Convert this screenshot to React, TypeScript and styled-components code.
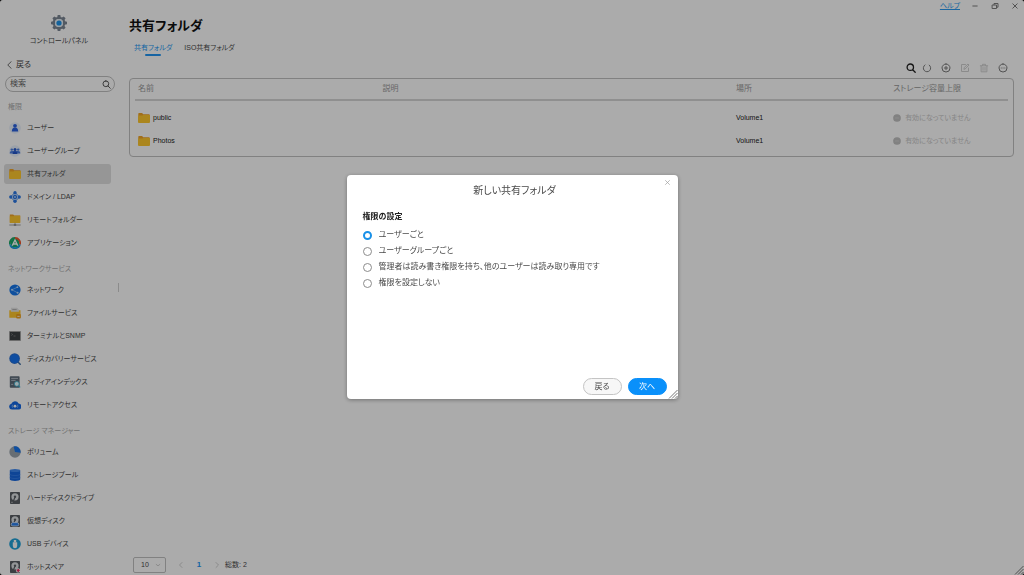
import React, { useState } from "react";
import styled, { createGlobalStyle, css } from "styled-components";

const GlobalStyle = createGlobalStyle`
  *, *::before, *::after { box-sizing: border-box; }
  html, body { margin: 0; background: #000; }
  body, button, input, select {
    font-family: "Liberation Sans", "Noto Sans CJK JP", sans-serif;
    font-size: 8px;
    line-height: 12px;
    font-feature-settings: "palt";
    color: #4a4a4a;
  }
  button, input, select { margin: 0; padding: 0; border: 0; background: none; }
  h1, h2, ul { margin: 0; padding: 0; }
  ul { list-style: none; }
  svg { display: block; flex: none; }
`;

const Window = styled.div`
  position: relative;
  display: flex;
  height: 100vh;
  overflow: hidden;
  background: #fff;
  border-radius: 3px;
`;

/* ---------- sidebar ---------- */

const Sidebar = styled.aside`
  display: flex;
  flex-direction: column;
  flex: none;
  width: 116px;
  padding: 14px 0 0 4px;
`;

const PanelHeader = styled.div`
  display: flex;
  flex-direction: column;
  align-items: center;
  gap: 3px;
  padding-right: 2px;
  font-size: 7px;
  line-height: 12px;
`;

const BackButton = styled.button`
  display: flex;
  align-items: center;
  align-self: flex-start;
  gap: 2px;
  margin: 12px 0 5px 2px;
`;

const SearchBox = styled.label`
  display: flex;
  align-items: center;
  flex: none;
  height: 16px;
  margin: 0 1px 9px 1px;
  padding: 0 3px 0 4px;
  border: 1px solid #c0c0c0;
  border-radius: 8px;
`;

const SearchInput = styled.input`
  flex: 1;
  min-width: 0;
  outline: none;
  &::placeholder { color: #666; opacity: 1; }
`;

const Nav = styled.nav`
  display: flex;
  flex-direction: column;
  gap: 10px;
  padding-right: 5px;
`;

const NavHeading = styled.h2`
  height: 17px;
  padding-left: 4px;
  font-size: 7px;
  font-weight: 400;
  line-height: 12px;
  color: #aaa;
`;

const NavList = styled.ul`
  display: flex;
  flex-direction: column;
  gap: 3px;
`;

const NavItem = styled.button<{ $active?: boolean }>`
  display: flex;
  align-items: center;
  gap: 6px;
  width: 100%;
  height: 20px;
  padding: 0 5px;
  border-radius: 3px;
  font-size: 7px;
  white-space: nowrap;
  background: ${(p) => (p.$active ? "#e0e0e0" : "transparent")};
`;

const Splitter = styled.div`
  display: flex;
  align-items: center;
  flex: none;
  width: 5px;
  padding-left: 2px;
  &::before {
    content: "";
    width: 1px;
    height: 9px;
    background: #d0d0d0;
  }
`;

/* ---------- main ---------- */

const Main = styled.main`
  display: flex;
  flex-direction: column;
  flex: 1;
  min-width: 0;
  padding: 0 10px 2px 8px;
`;

const TitleBar = styled.div`
  display: flex;
  justify-content: flex-end;
  align-items: center;
  gap: 10px;
  height: 12px;
  margin-right: -6px;
`;

const HelpLink = styled.a`
  font-size: 7px;
  color: #2a9af0;
  text-decoration: underline;
`;

const IconButton = styled.button<{ $faded?: boolean }>`
  display: flex;
  align-items: center;
  justify-content: center;
  width: 10px;
  height: 10px;
  color: ${(p) => (p.$faded ? "#cfcfcf" : "#7c7c7c")};
`;

const PageTitle = styled.h1`
  margin-top: 5px;
  font-size: 13px;
  line-height: 18px;
  color: #111;
`;

const Tabs = styled.div`
  display: flex;
  gap: 12px;
  margin: 7px 0 0 5px;
`;

const Tab = styled.button<{ $active?: boolean }>`
  display: flex;
  flex-direction: column;
  align-items: center;
  height: 14px;
  font-size: 7px;
  ${(p) =>
    p.$active &&
    css`
      color: #2196f3;
      &::after {
        content: "";
        width: 16px;
        height: 2px;
        border-radius: 1px;
        background: #2196f3;
      }
    `}
`;

const Toolbar = styled.div`
  display: flex;
  justify-content: flex-end;
  gap: 9px;
  margin: 7px 6px 5px 0;
`;

const SearchTool = styled(IconButton)`
  margin-right: -3px;
  color: #222;
`;

const TableCard = styled.div`
  padding: 0 5px 4px;
  border: 1px solid #c0c0c0;
  border-radius: 4px;
`;

const FolderTable = styled.table`
  width: 100%;
  table-layout: fixed;
  border-collapse: collapse;
`;

const HeadCell = styled.th<{ $width?: string }>`
  width: ${(p) => p.$width ?? "auto"};
  height: 21px;
  padding: 0 3px;
  border-bottom: 2px solid #d6d6d6;
  font-weight: 400;
  text-align: left;
  color: #999;
`;

const Cell = styled.td`
  height: 23px;
  padding: 0 3px;
  font-size: 7px;
  color: #222;
`;

const SpacerRow = styled.tr`
  height: 6px;
`;

const CellContent = styled.div<{ $muted?: boolean }>`
  display: flex;
  align-items: center;
  gap: ${(p) => (p.$muted ? "4px" : "3px")};
  color: ${(p) => (p.$muted ? "#c8c8c8" : "#222")};
`;

const Pager = styled.footer`
  display: flex;
  align-items: center;
  margin: auto 0 0 4px;
`;

const SizeBox = styled.label`
  display: grid;
  align-items: center;
  width: 33px;
  height: 16px;
  border: 1px solid #c0c0c0;
  border-radius: 2px;
  color: #b0b0b0;
  & > * { grid-area: 1 / 1; }
  & > svg { justify-self: end; margin-right: 4px; pointer-events: none; }
`;

const SizeSelect = styled.select`
  appearance: none;
  width: 100%;
  height: 100%;
  padding-left: 7px;
  font-size: 7px;
`;

const PageControls = styled.div`
  display: flex;
  align-items: center;
  gap: 8px;
  margin: 0 3px 0 10px;
`;

const PageNumber = styled.button`
  width: 10px;
  font-weight: 700;
  color: #2196f3;
`;

const Total = styled.span`
  font-size: 7px;
`;

/* ---------- dialog ---------- */

const Backdrop = styled.div`
  position: fixed;
  inset: 0;
  display: flex;
  align-items: center;
  justify-content: center;
  padding-bottom: 1px;
  border-radius: 3px;
  background: rgba(0, 0, 0, 0.33);
`;

const Dialog = styled.section`
  position: relative;
  display: flex;
  flex-direction: column;
  width: 331px;
  max-width: 90%;
  min-height: 224px;
  padding: 8px 11px 4px 16px;
  border-radius: 4px;
  background: #fff;
  box-shadow: 0 1px 4px rgba(0, 0, 0, 0.35);
`;

const DialogTitle = styled.h2`
  font-size: 10px;
  font-weight: 400;
  line-height: 16px;
  text-align: center;
`;

const CloseButton = styled(IconButton)`
  position: absolute;
  top: 2px;
  right: 5px;
  color: #a0a0a0;
`;

const Options = styled.fieldset`
  display: flex;
  flex-direction: column;
  gap: 4px;
  margin: 12px 0 0;
  padding: 0;
  border: 0;
`;

const Legend = styled.legend`
  margin-bottom: 6px;
  padding: 0;
  font-weight: 700;
  color: #222;
`;

const Option = styled.label`
  display: flex;
  align-items: center;
  gap: 7px;
`;

const Radio = styled.input`
  appearance: none;
  width: 9px;
  height: 9px;
  border: 1px solid #8c8c8c;
  border-radius: 50%;
  &:checked { border: 2px solid #1890e8; }
`;

const Actions = styled.div`
  display: flex;
  justify-content: flex-end;
  gap: 6px;
  margin-top: auto;
`;

const PillButton = styled.button<{ $primary?: boolean }>`
  width: 39px;
  height: 17px;
  border: 1px solid ${(p) => (p.$primary ? "#0a90fa" : "#c4c4c4")};
  border-radius: 9px;
  color: ${(p) => (p.$primary ? "#fff" : "#4a4a4a")};
  background: ${(p) => (p.$primary ? "#0a90fa" : "#f7f7f7")};
`;

const Corner = styled.span`
  position: absolute;
  right: 0;
  bottom: 0;
`;

/* ---------- icons ---------- */

const Svg = ({ size = 12, box = 12, children }: { size?: number; box?: number; children: React.ReactNode }) => (
  <svg width={size} height={size} viewBox={`0 0 ${box} ${box}`} fill="none" aria-hidden="true">
    {children}
  </svg>
);

const Stroke = ({ size = 10, d, width = 1 }: { size?: number; d: string; width?: number }) => (
  <Svg size={size} box={10}>
    <path d={d} stroke="currentColor" strokeWidth={width} strokeLinecap="round" strokeLinejoin="round" />
  </Svg>
);

const ICON = {
  back: "M6.5 .8 2.2 5l4.3 4.2",
  search: "M4.3 1a3.2 3.2 0 1 1 0 6.4 3.2 3.2 0 0 1 0-6.4ZM6.7 6.7 9.2 9.2",
  refresh: "M7.3 2.1A3.7 3.7 0 1 1 3 1.9",
  add: "M5 1a4 4 0 1 1 0 8 4 4 0 0 1 0-8ZM5 3.4v3.2M3.4 5h3.2",
  edit: "M5.5 1.5h-4v7h7V5M4 6l.3-1.5L8 1l1 1-3.6 3.7Z",
  trash: "M1.3 2.8h7.4M3.5 2.6V1.3h3v1.3M2.1 3v5.8h5.8V3M4 4.5v2.8M6 4.5v2.8",
  more: "M5 1a4 4 0 1 1 0 8 4 4 0 0 1 0-8ZM3.2 5h.1M5 5h.1M6.8 5h.1",
  close: "M2.8 2.8l4.4 4.4M7.2 2.8 2.8 7.2",
  minimize: "M2.8 5h4.4",
  restore: "M2.5 4h4v3.5h-4ZM4 3.8V2.5h4v3.7H6.7",
  down: "M2 4 5 6.5 8 4",
  prev: "M6 2.5 3.5 5 6 7.5",
  next: "M4 2.5 6.5 5 4 7.5",
};

const GearIcon = () => (
  <Svg size={18} box={18}>
    {[0, 45, 90, 135, 180, 225, 270, 315].map((a) => (
      <path key={a} d="M7.2 3.5 7.7 1h2.6l.5 2.5Z" fill="#7c8794" transform={`rotate(${a} 9 9)`} />
    ))}
    <circle cx="9" cy="9" r="5.2" stroke="#7c8794" strokeWidth="2.2" />
    <circle cx="9" cy="9" r="4" fill="#e4eef6" />
    <circle cx="9" cy="9" r="2.6" fill="#1b93ea" />
  </Svg>
);

const FolderIcon = () => (
  <Svg>
    <path d="M.3 1.8c0-.4.3-.7.7-.7h3.1l1.1 1.2H11c.4 0 .7.3.7.7v7.3H.3Z" fill="#f0a428" />
    <path d="M.3 3.600h4L5.300 3H12v7.100c0 .5-.4.8-.8.8H.8c-.4 0-.8-.3-.8-.8Z" fill="#ffc82e" />
  </Svg>
);

const UserIcon = () => (
  <Svg>
    <circle cx="6" cy="6" r="5.8" fill="#e8f0fc" />
    <circle cx="6" cy="3.8" r="1.9" fill="#2b62e0" />
    <path d="M2.8 9.6c0-2.6 1.2-4 3.2-4s3.2 1.4 3.2 4Z" fill="#2b62e0" />
  </Svg>
);

const GroupIcon = () => (
  <Svg>
    <circle cx="6" cy="6" r="5.8" fill="#e8f0fc" />
    <circle cx="2.8" cy="4.6" r="1.2" fill="#4c7fe2" />
    <circle cx="9.2" cy="4.6" r="1.2" fill="#4c7fe2" />
    <path d="M.7 8.5c0-1.6.8-2.4 2.2-2.4h6.2c1.4 0 2.2.8 2.2 2.4Z" fill="#4c7fe2" />
    <circle cx="6" cy="4.4" r="1.5" fill="#2456c8" />
    <path d="M3.6 9.1c0-1.9.9-2.9 2.4-2.9s2.4 1 2.4 2.9Z" fill="#2456c8" />
  </Svg>
);

const DomainIcon = () => (
  <Svg>
    <path d="M6 1.5 10.5 6 6 10.5 1.5 6Z" stroke="#3f86e8" />
    <circle cx="6" cy="1.8" r="1.7" fill="#2c78e4" />
    <circle cx="6" cy="10.2" r="1.7" fill="#2c78e4" />
    <circle cx="1.8" cy="6" r="1.7" fill="#2c78e4" />
    <circle cx="10.2" cy="6" r="1.7" fill="#2c78e4" />
    <circle cx="6" cy="6" r="2.2" fill="#2c78e4" />
    <circle cx="6" cy="6" r=".8" fill="#fff" />
  </Svg>
);

const RemoteFolderIcon = () => (
  <Svg>
    <path d="M.8.5h3.4l1 1h6v7H.8Z" fill="#f0a428" />
    <path d="M.8 2.2h3.8l.8-.5h5.8v7.2H.8Z" fill="#ffc82e" />
    <path d="M6 8.900v2M.3 11h11.4" stroke="#8a8a8a" strokeWidth=".8" />
    <rect x="4.8" y="10.200" width="2.400" height="1.600" fill="#8a8a8a" />
  </Svg>
);

const AppIcon = () => (
  <Svg>
    <circle cx="6" cy="6" r="4.6" fill="#18a86a" />
    <path d="M1.1 7.500A5 5 0 0 1 6 1" stroke="#1fa866" strokeWidth="1.800" />
    <path d="M6 1a5 5 0 0 1 4.900 6.500" stroke="#f0572c" strokeWidth="1.800" />
    <path d="M10.900 7.500A5.100 5.100 0 0 1 1.100 7.500" stroke="#1f9fe0" strokeWidth="1.800" />
    <path d="M3.300 8.600 6 3l2.700 5.600M4.400 7h3.200" stroke="#fff" strokeWidth="1.300" />
  </Svg>
);

const NetworkIcon = () => (
  <Svg>
    <circle cx="6" cy="6" r="5.6" fill="#1676ea" />
    <path d="M3 5.8 8.4 3.2M3 5.8l5.600 3" stroke="#8fc4ff" strokeWidth=".7" />
    <circle cx="3" cy="5.8" r="1" fill="#b4d8ff" />
    <circle cx="8.4" cy="3.2" r=".9" fill="#b4d8ff" />
    <circle cx="8.6" cy="8.8" r="1" fill="#b4d8ff" />
  </Svg>
);

const FileServiceIcon = () => (
  <Svg>
    <path d="M2 .8h6l2 2V6H2Z" fill="#e4e4e4" />
    <path d="M.3 3.2h1.6v1.5h8V3.2h1.6v7.6H.3Z" fill="#ffc62c" />
    <path d="M3.3 2.6h4.3" stroke="#9d9d9d" strokeWidth=".8" />
    <rect x="7.2" y="7" width="4.6" height="4.6" rx="1" fill="#f0a01e" />
    <path d="M8.3 9.4h2.4" stroke="#fff" strokeWidth=".8" />
  </Svg>
);

const TerminalIcon = () => (
  <Svg>
    <rect x=".2" y="1.200" width="11.600" height="9.600" fill="#8c8c8c" />
    <rect x="1" y="2" width="10" height="8" fill="#3c4044" />
    <path d="m2.300 3.500 1.300 1-1.300 1M4.500 6h2" stroke="#999" strokeWidth=".6" />
  </Svg>
);

const DiscoveryIcon = () => (
  <Svg>
    <path d="m9.2 9.2 2 2" stroke="#3e6fa6" strokeWidth="1.5" strokeLinecap="round" />
    <circle cx="5.6" cy="5.600" r="5.300" fill="#2a6fd0" />
    <circle cx="5.6" cy="5.600" r="4.400" fill="#1673f0" />
  </Svg>
);

const MediaIcon = () => (
  <Svg>
    <rect x=".8" y=".2" width="9.8" height="11.6" rx=".8" fill="#5d6c7a" />
    <path d="M2.2 2.4h6.8M2.2 4.4h4.4M2.2 8.4h2" stroke="#c4ccd4" strokeWidth=".8" />
    <circle cx="7.8" cy="7.9" r="2.4" fill="#e8fbff" stroke="#38b4d4" strokeWidth=".8" />
    <path d="m9.6 9.8 1.6 1.6" stroke="#38b4d4" strokeWidth="1.1" />
  </Svg>
);

const CloudIcon = () => (
  <Svg>
    <path d="M3 10.600a3 3 0 0 1-.6-5.900 3.900 3.900 0 0 1 7.200-.1 3 3 0 0 1-.5 6Z" fill="#1468e4" />
    <circle cx="6" cy="7.2" r="1.4" fill="#fff" />
    <path d="M3.6 5.7a2.8 2.8 0 0 0 0 3M8.4 5.7a2.8 2.8 0 0 1 0 3" stroke="#9ecbff" strokeWidth=".7" />
  </Svg>
);

const VolumeIcon = () => (
  <Svg>
    <circle cx="6" cy="6" r="5.7" fill="#9aa4ae" />
    <path d="M6 6 4.600.5A5.700 5.700 0 0 1 11.600 6.800Z" fill="#1676f0" />
  </Svg>
);

const PoolIcon = () => (
  <Svg>
    <path d="M.8 1.6v8.900c0 .8 2.300 1.400 5.200 1.400s5.200-.6 5.200-1.400V1.600Z" fill="#1667e0" />
    <ellipse cx="6" cy="1.6" rx="5.2" ry="1.5" fill="#3f8af2" />
    <path d="M.8 5c0 .9 2.3 1.5 5.2 1.5S11.2 5.9 11.2 5M.8 8c0 .9 2.3 1.5 5.2 1.5S11.2 8.9 11.2 8" stroke="#3f8af2" strokeWidth=".6" />
  </Svg>
);

const DiskShape = () => (
  <>
    <rect x="1" y="0" width="10" height="12" rx=".8" fill="#5a5f64" />
    <circle cx="6" cy="4.8" r="3.6" fill="#dcdfe2" />
    <circle cx="6" cy="4.8" r="1.2" fill="#5a5f64" />
    <path d="M5.9 5.5 4 9.8" stroke="#5a5f64" strokeWidth="1.2" />
  </>
);

const DiskIcon = () => (
  <Svg>
    <DiskShape />
    <path d="M2.4 10.3h1.2" stroke="#cfd3d6" />
  </Svg>
);

const VirtualDiskIcon = () => (
  <Svg>
    <DiskShape />
    <rect x="2.2" y="7.6" width="7.6" height="3.4" rx="1.6" fill="#2c80ee" stroke="#e8f2ff" strokeWidth=".7" />
  </Svg>
);

const UsbIcon = () => (
  <Svg>
    <circle cx="6" cy="6" r="5.8" fill="#22a2d8" />
    <rect x="4.8" y="2" width="2.4" height="2.4" fill="#fff" />
    <path d="M3.8 4.2h4.4v3.900a2.200 2.200 0 0 1-4.400 0Z" fill="#fff" />
  </Svg>
);

const HotSpareIcon = () => (
  <Svg>
    <DiskShape />
    <circle cx="9.2" cy="9.4" r="2.200" fill="#fff" />
    <path d="M9.2 7.9v3M7.7 9.4h3" stroke="#f02a60" strokeWidth="1.4" />
  </Svg>
);

const DisabledIcon = () => (
  <Svg size={8} box={10}>
    <circle cx="5" cy="5" r="4.8" fill="#c0c0c0" />
    <path d="M2.6 5h4.8" stroke="#d6d6d6" />
  </Svg>
);

const ResizeGrip = () => (
  <Corner>
    <Svg size={10} box={10}>
      <path d="M1 9.5 9.5 1M4 9.5 9.5 4M7 9.5 9.5 7" stroke="#666" strokeWidth=".9" />
    </Svg>
  </Corner>
);

/* ---------- data ---------- */

const sections = [
  {
    title: "権限",
    items: [
      { label: "ユーザー", Icon: UserIcon },
      { label: "ユーザーグループ", Icon: GroupIcon },
      { label: "共有フォルダ", Icon: FolderIcon },
      { label: "ドメイン / LDAP", Icon: DomainIcon },
      { label: "リモートフォルダー", Icon: RemoteFolderIcon },
      { label: "アプリケーション", Icon: AppIcon },
    ],
  },
  {
    title: "ネットワークサービス",
    items: [
      { label: "ネットワーク", Icon: NetworkIcon },
      { label: "ファイルサービス", Icon: FileServiceIcon },
      { label: "ターミナルとSNMP", Icon: TerminalIcon },
      { label: "ディスカバリーサービス", Icon: DiscoveryIcon },
      { label: "メディアインデックス", Icon: MediaIcon },
      { label: "リモートアクセス", Icon: CloudIcon },
    ],
  },
  {
    title: "ストレージ マネージャー",
    items: [
      { label: "ボリューム", Icon: VolumeIcon },
      { label: "ストレージプール", Icon: PoolIcon },
      { label: "ハードディスクドライブ", Icon: DiskIcon },
      { label: "仮想ディスク", Icon: VirtualDiskIcon },
      { label: "USB デバイス", Icon: UsbIcon },
      { label: "ホットスペア", Icon: HotSpareIcon },
    ],
  },
];

const folders = [
  { name: "public", place: "Volume1" },
  { name: "Photos", place: "Volume1" },
];

const permissions = [
  "ユーザーごと",
  "ユーザーグループごと",
  "管理者は読み書き権限を持ち、他のユーザーは読み取り専用です",
  "権限を設定しない",
];

export default function App() {
  const [permission, setPermission] = useState(0);

  return (
    <>
      <GlobalStyle />
      <Window lang="ja">
        <Sidebar>
          <PanelHeader>
            <GearIcon />
            コントロールパネル
          </PanelHeader>
          <BackButton type="button">
            <Stroke size={8} d={ICON.back} />
            戻る
          </BackButton>
          <SearchBox>
            <SearchInput type="text" placeholder="検索" aria-label="検索" />
            <Stroke size={9} d={ICON.search} />
          </SearchBox>
          <Nav>
            {sections.map((section) => (
              <div key={section.title}>
                <NavHeading>{section.title}</NavHeading>
                <NavList>
                  {section.items.map(({ label, Icon }) => (
                    <li key={label}>
                      <NavItem type="button" $active={label === "共有フォルダ"}>
                        <Icon />
                        {label}
                      </NavItem>
                    </li>
                  ))}
                </NavList>
              </div>
            ))}
          </Nav>
        </Sidebar>
        <Splitter />
        <Main>
          <TitleBar>
            <HelpLink href="#help">ヘルプ</HelpLink>
            <IconButton type="button" aria-label="最小化"><Stroke d={ICON.minimize} /></IconButton>
            <IconButton type="button" aria-label="元に戻す"><Stroke d={ICON.restore} /></IconButton>
            <IconButton type="button" aria-label="閉じる"><Stroke d={ICON.close} /></IconButton>
          </TitleBar>
          <PageTitle>共有フォルダ</PageTitle>
          <Tabs>
            <Tab type="button" $active>共有フォルダ</Tab>
            <Tab type="button">ISO共有フォルダ</Tab>
          </Tabs>
          <Toolbar>
            <SearchTool type="button" aria-label="検索"><Stroke d={ICON.search} width={1.3} /></SearchTool>
            <IconButton type="button" aria-label="更新"><Stroke d={ICON.refresh} /></IconButton>
            <IconButton type="button" aria-label="追加"><Stroke d={ICON.add} /></IconButton>
            <IconButton type="button" aria-label="編集" $faded><Stroke d={ICON.edit} /></IconButton>
            <IconButton type="button" aria-label="削除" $faded><Stroke d={ICON.trash} /></IconButton>
            <IconButton type="button" aria-label="その他"><Stroke d={ICON.more} /></IconButton>
          </Toolbar>
          <TableCard>
            <FolderTable>
              <thead>
                <tr>
                  <HeadCell $width="28%">名前</HeadCell>
                  <HeadCell $width="40.5%">説明</HeadCell>
                  <HeadCell $width="18%">場所</HeadCell>
                  <HeadCell>ストレージ容量上限</HeadCell>
                </tr>
              </thead>
              <tbody>
                <SpacerRow />
                {folders.map((folder) => (
                  <tr key={folder.name}>
                    <Cell>
                      <CellContent>
                        <FolderIcon />
                        {folder.name}
                      </CellContent>
                    </Cell>
                    <Cell />
                    <Cell>{folder.place}</Cell>
                    <Cell>
                      <CellContent $muted>
                        <DisabledIcon />
                        有効になっていません
                      </CellContent>
                    </Cell>
                  </tr>
                ))}
              </tbody>
            </FolderTable>
          </TableCard>
          <Pager>
            <SizeBox>
              <SizeSelect aria-label="表示件数" defaultValue="10">
                <option>10</option>
              </SizeSelect>
              <Stroke size={6} d={ICON.down} />
            </SizeBox>
            <PageControls>
              <IconButton type="button" aria-label="前へ" $faded><Stroke d={ICON.prev} /></IconButton>
              <PageNumber type="button">1</PageNumber>
              <IconButton type="button" aria-label="次へ" $faded><Stroke d={ICON.next} /></IconButton>
            </PageControls>
            <Total>総数: 2</Total>
          </Pager>
        </Main>
        <ResizeGrip />
        <Backdrop>
          <Dialog role="dialog" aria-modal="true" aria-labelledby="dialog-title">
            <CloseButton type="button" aria-label="閉じる"><Stroke size={9} d={ICON.close} width={0.8} /></CloseButton>
            <DialogTitle id="dialog-title">新しい共有フォルダ</DialogTitle>
            <Options>
              <Legend>権限の設定</Legend>
              {permissions.map((label, i) => (
                <Option key={label}>
                  <Radio
                    type="radio"
                    name="permission"
                    checked={permission === i}
                    onChange={() => setPermission(i)}
                  />
                  {label}
                </Option>
              ))}
            </Options>
            <Actions>
              <PillButton type="button">戻る</PillButton>
              <PillButton type="button" $primary>次へ</PillButton>
            </Actions>
            <ResizeGrip />
          </Dialog>
        </Backdrop>
      </Window>
    </>
  );
}
